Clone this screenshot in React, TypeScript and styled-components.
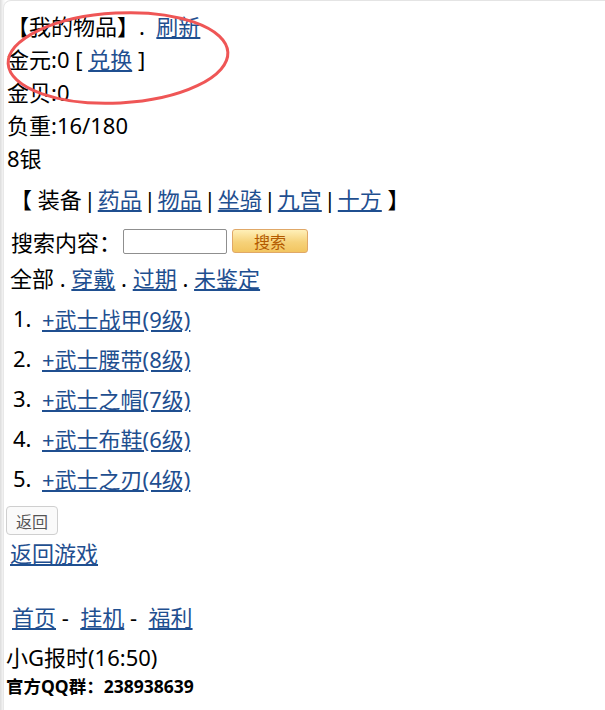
import styled, { createGlobalStyle } from 'styled-components'

const GlobalStyle = createGlobalStyle`
  html, body {
    margin: 0;
    padding: 0;
  }
  body {
    background: linear-gradient(to right, #dcdcdc 0px, #f4f4f4 3px, #fff 6px);
  }
`

const Card = styled.div`
  position: relative;
  margin-left: 3px;
  min-height: 100vh;
  box-sizing: border-box;
  padding: 9px 0 0 2px;
  background: #fff;
  border-top: 1px solid #e4e4e4;
  border-left: 1px solid #e8e8e8;
  border-top-left-radius: 8px;
  font-family: 'Noto Sans', 'Noto Sans CJK SC', sans-serif;
  font-size: 22px;
  color: #000;
`

const Line = styled.div<{ $top?: number; $indent?: number }>`
  line-height: 33px;
  margin-top: ${(p) => p.$top ?? 0}px;
  padding-left: ${(p) => p.$indent ?? 1}px;
  white-space: pre;
`

const Link = styled.a`
  color: #1f4f90;
  text-decoration: underline;
  cursor: pointer;
`

const Sep = styled.span`
  display: inline-block;
  width: 16px;
  text-align: center;
`

const SearchRow = styled.div`
  display: flex;
  align-items: center;
  height: 34px;
  margin-top: 8px;
  padding-left: 5px;
`

const SearchInput = styled.input`
  width: 104px;
  height: 25px;
  box-sizing: border-box;
  margin: 0 5px 0 2px;
  border: 1px solid #8f8f8f;
  border-radius: 2px;
  background: #fff;
`

const SearchButton = styled.button`
  width: 76px;
  height: 24px;
  box-sizing: border-box;
  padding: 0;
  border: 1px solid #e0a868;
  border-radius: 3px;
  background: linear-gradient(to bottom, #fff0b8, #f6d27a 55%, #f2c560);
  color: #b35a00;
  font-family: 'Noto Sans CJK SC', sans-serif;
  font-size: 16px;
  line-height: 20px;
`

const List = styled.ol`
  list-style: none;
  margin: 3px 0 0;
  padding: 0;
`

const Item = styled.li`
  display: flex;
  height: 40px;
  align-items: center;
`

const Num = styled.span`
  width: 36px;
  padding-left: 7px;
  box-sizing: border-box;
`

const BackButton = styled.button`
  display: block;
  margin: 8px 0 0;
  height: 29px;
  padding: 0 9px;
  border: 1px solid #cfcfcf;
  border-radius: 4px;
  background: #fafafa;
  color: #555;
  font-family: 'Noto Sans CJK SC', sans-serif;
  font-size: 16px;
`

const Clock = styled.div`
  line-height: 33px;
  margin-top: 7px;
`

const Group = styled.div`
  font-size: 17.5px;
  font-weight: bold;
  line-height: 24px;
`

const Mark = styled.svg`
  position: absolute;
  left: 0;
  top: 0;
  pointer-events: none;
`

export default function App() {
  const items = ['+武士战甲(9级)', '+武士腰带(8级)', '+武士之帽(7级)', '+武士布鞋(6级)', '+武士之刃(4级)']
  const tabs = ['药品', '物品', '坐骑', '九宫', '十方']
  return (
    <>
      <GlobalStyle />
      <Card>
        <Line>
          【我的物品】.  <Link>刷新</Link>
        </Line>
        <Line>
          金元:0 [ <Link>兑换</Link> ]
        </Line>
        <Line>金贝:0</Line>
        <Line>负重:16/180</Line>
        <Line>8银</Line>
        <Line $top={8} $indent={4}>
          【 装备
          {tabs.map((t) => (
            <span key={t}>
              <Sep>|</Sep>
              <Link>{t}</Link>
            </span>
          ))}
          {' 】'}
        </Line>
        <SearchRow>
          搜索内容：
          <SearchInput type="text" />
          <SearchButton>搜索</SearchButton>
        </SearchRow>
        <Line $top={4} $indent={4}>
          全部 . <Link>穿戴</Link> . <Link>过期</Link> . <Link>未鉴定</Link>
        </Line>
        <List>
          {items.map((it, i) => (
            <Item key={it}>
              <Num>{i + 1}.</Num>
              <Link>{it}</Link>
            </Item>
          ))}
        </List>
        <BackButton>返回</BackButton>
        <Line $top={2} $indent={4}>
          <Link>返回游戏</Link>
        </Line>
        <Line $top={31} $indent={6}>
          <Link>首页</Link>
          {' -  '}
          <Link>挂机</Link>
          {' -  '}
          <Link>福利</Link>
        </Line>
        <Clock>小G报时(16:50)</Clock>
        <Group>官方QQ群：238938639</Group>
        <Mark width="240" height="112" viewBox="0 0 240 112">
          <ellipse
            cx="114"
            cy="57"
            rx="110"
            ry="45"
            fill="none"
            stroke="#ef5656"
            strokeWidth="3"
            transform="rotate(-3 114 57)"
          />
        </Mark>
      </Card>
    </>
  )
}
